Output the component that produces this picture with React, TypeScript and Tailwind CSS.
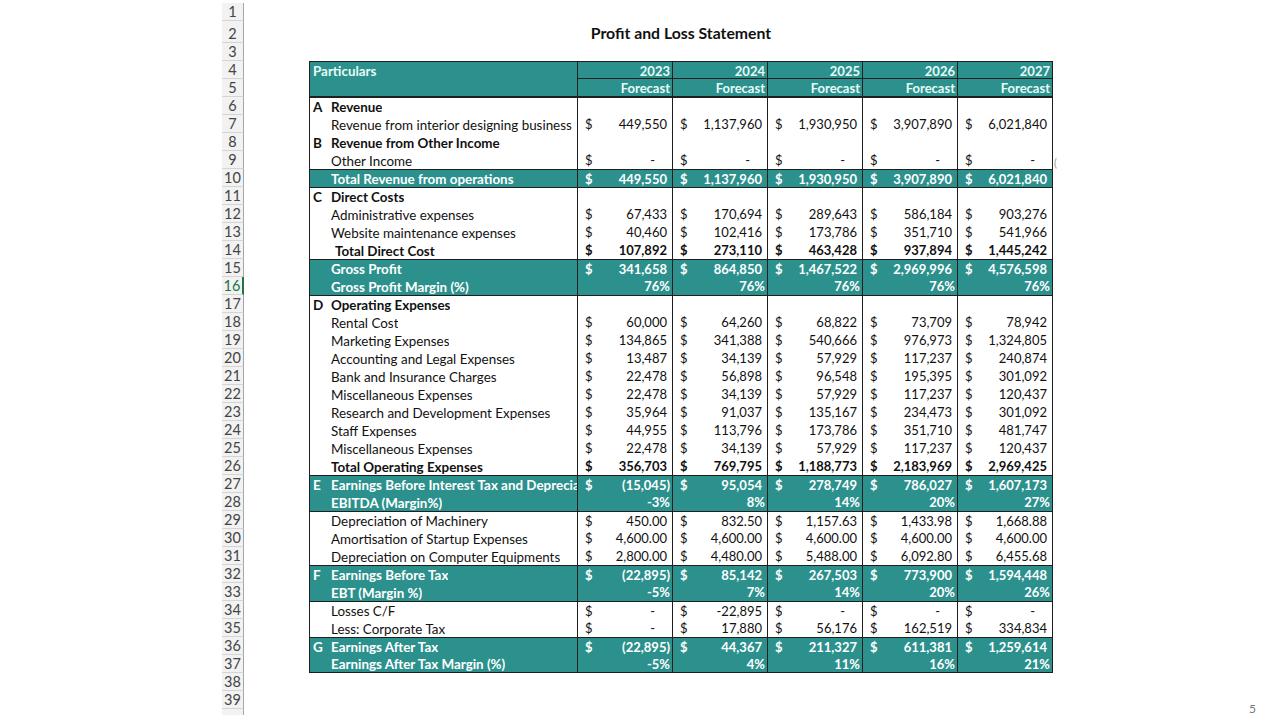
import * as React from "react";

type Kind = "plain" | "bold" | "teal" | "section";

interface Line {
  n: number;
  letter?: string;
  label: string;
  kind: Kind;
  values?: string[];
  pct?: boolean;
  indent?: boolean;
  top?: boolean;
  bottom?: boolean;
}

const lines: Line[] = [
  { n: 6, letter: "A", label: "Revenue", kind: "section", top: true },
  { n: 7, label: "Revenue from interior designing business", kind: "plain", values: ["449,550", "1,137,960", "1,930,950", "3,907,890", "6,021,840"] },
  { n: 8, letter: "B", label: "Revenue from Other Income", kind: "section" },
  { n: 9, label: "Other Income", kind: "plain", values: ["-", "-", "-", "-", "-"] },
  { n: 10, label: "Total Revenue from operations", kind: "teal", top: true, values: ["449,550", "1,137,960", "1,930,950", "3,907,890", "6,021,840"] },
  { n: 11, letter: "C", label: "Direct Costs", kind: "section", top: true },
  { n: 12, label: "Administrative expenses", kind: "plain", values: ["67,433", "170,694", "289,643", "586,184", "903,276"] },
  { n: 13, label: "Website maintenance expenses", kind: "plain", values: ["40,460", "102,416", "173,786", "351,710", "541,966"] },
  { n: 14, label: "Total Direct Cost", kind: "bold", indent: true, values: ["107,892", "273,110", "463,428", "937,894", "1,445,242"] },
  { n: 15, label: "Gross Profit", kind: "teal", top: true, values: ["341,658", "864,850", "1,467,522", "2,969,996", "4,576,598"] },
  { n: 16, label: "Gross Profit Margin (%)", kind: "teal", pct: true, values: ["76%", "76%", "76%", "76%", "76%"] },
  { n: 17, letter: "D", label: "Operating Expenses", kind: "section", top: true },
  { n: 18, label: "Rental Cost", kind: "plain", values: ["60,000", "64,260", "68,822", "73,709", "78,942"] },
  { n: 19, label: "Marketing Expenses", kind: "plain", values: ["134,865", "341,388", "540,666", "976,973", "1,324,805"] },
  { n: 20, label: "Accounting and Legal Expenses", kind: "plain", values: ["13,487", "34,139", "57,929", "117,237", "240,874"] },
  { n: 21, label: "Bank and Insurance Charges", kind: "plain", values: ["22,478", "56,898", "96,548", "195,395", "301,092"] },
  { n: 22, label: "Miscellaneous Expenses", kind: "plain", values: ["22,478", "34,139", "57,929", "117,237", "120,437"] },
  { n: 23, label: "Research and Development Expenses", kind: "plain", values: ["35,964", "91,037", "135,167", "234,473", "301,092"] },
  { n: 24, label: "Staff Expenses", kind: "plain", values: ["44,955", "113,796", "173,786", "351,710", "481,747"] },
  { n: 25, label: "Miscellaneous Expenses", kind: "plain", values: ["22,478", "34,139", "57,929", "117,237", "120,437"] },
  { n: 26, label: "Total Operating Expenses", kind: "bold", values: ["356,703", "769,795", "1,188,773", "2,183,969", "2,969,425"] },
  { n: 27, letter: "E", label: "Earnings Before Interest Tax and Deprecia", kind: "teal", top: true, values: ["(15,045)", "95,054", "278,749", "786,027", "1,607,173"] },
  { n: 28, label: "EBITDA (Margin%)", kind: "teal", pct: true, values: ["-3%", "8%", "14%", "20%", "27%"] },
  { n: 29, label: "Depreciation of Machinery", kind: "plain", top: true, values: ["450.00", "832.50", "1,157.63", "1,433.98", "1,668.88"] },
  { n: 30, label: "Amortisation of Startup Expenses", kind: "plain", values: ["4,600.00", "4,600.00", "4,600.00", "4,600.00", "4,600.00"] },
  { n: 31, label: "Depreciation on Computer Equipments", kind: "plain", values: ["2,800.00", "4,480.00", "5,488.00", "6,092.80", "6,455.68"] },
  { n: 32, letter: "F", label: "Earnings Before Tax", kind: "teal", top: true, values: ["(22,895)", "85,142", "267,503", "773,900", "1,594,448"] },
  { n: 33, label: "EBT (Margin %)", kind: "teal", pct: true, values: ["-5%", "7%", "14%", "20%", "26%"] },
  { n: 34, label: "Losses C/F", kind: "plain", top: true, values: ["-", "-22,895", "-", "-", "-"] },
  { n: 35, label: "Less: Corporate Tax", kind: "plain", values: ["-", "17,880", "56,176", "162,519", "334,834"] },
  { n: 36, letter: "G", label: "Earnings After Tax", kind: "teal", top: true, values: ["(22,895)", "44,367", "211,327", "611,381", "1,259,614"] },
  { n: 37, label: "Earnings After Tax Margin (%)", kind: "teal", pct: true, bottom: true, values: ["-5%", "4%", "11%", "16%", "21%"] },
];

function RowHead({ n, h = "h-[18px]" }: { n: number; h?: string }) {
  return (
    <div
      className={`${h} w-[22px] shrink-0 box-border bg-[#f2f2f2] border-b border-[#d4d4d4] border-r ${
        n === 16 ? "border-r-2 border-r-[#217346] text-[#217346]" : "border-r-[#a6a6a6] text-[#444]"
      } flex items-end justify-center text-[14.5px] leading-[17px]`}
    >
      {n}
    </div>
  );
}

function Value({ v, line, last }: { v: string; line: Line; last: boolean }) {
  const teal = line.kind === "teal";
  const bold = teal || line.kind === "bold";
  const dash = v === "-";
  const pr = line.pct ? "pr-[2px]" : dash ? "pr-[17px]" : v.startsWith("(") ? "pr-[2px]" : "pr-[5px]";
  return (
    <div
      className={`${last ? "w-[96px] border-r" : "w-[95px]"} shrink-0 box-border border-l border-[#1f1f1f] flex items-center justify-between pt-[2px] ${
        bold ? "font-bold" : ""
      }`}
    >
      <span className="pl-[7px]">{line.pct ? "" : "$"}</span>
      <span className={pr}>{v}</span>
    </div>
  );
}

function DataRow({ line }: { line: Line }) {
  const teal = line.kind === "teal";
  const bold = line.kind !== "plain";
  return (
    <div className="flex h-[18px]">
      <RowHead n={line.n} />
      <div className="w-[65px] shrink-0" />
      <div
        className={`flex box-border ${line.top ? "border-t" : ""} ${line.bottom ? "border-b" : ""} border-[#1f1f1f] ${
          teal ? "bg-[#2c918d] text-white" : "text-[#111]"
        }`}
      >
        <div className="w-[268px] shrink-0 box-border border-l border-[#1f1f1f] flex items-center pt-[2px] overflow-hidden whitespace-nowrap">
          <span className={`w-[21px] shrink-0 pl-[3px] text-[13.5px] ${bold ? "font-bold" : ""}`}>{line.letter ?? ""}</span>
          <span className={`min-w-0 overflow-hidden text-[13.4px] ${bold ? "font-bold" : ""} ${line.indent ? "pl-[4px]" : ""}`}>
            {line.label}
          </span>
        </div>
        {line.values
          ? line.values.map((v, i) => <Value key={i} v={v} line={line} last={i === 4} />)
          : [0, 1, 2, 3, 4].map((i) => (
              <div
                key={i}
                className={`${i === 4 ? "w-[96px] border-r" : "w-[95px]"} shrink-0 box-border border-l border-[#1f1f1f]`}
              />
            ))}
      </div>
    </div>
  );
}

function EmptyRow({ n, h = "h-[18px]", children }: { n: number; h?: string; children?: React.ReactNode }) {
  return (
    <div className={`flex ${h}`}>
      <RowHead n={n} h={h} />
      <div className="w-[65px] shrink-0" />
      <div className="w-[744px] shrink-0 flex items-center justify-center pt-[2px]">{children}</div>
    </div>
  );
}

const years = ["2023", "2024", "2025", "2026", "2027"];

export default function App() {
  return (
    <div
      className="relative w-[1280px] h-[720px] overflow-hidden bg-white text-[13px] pt-[3px] pl-[222px]"
      style={{ fontFamily: "Lato, 'Open Sans', sans-serif" }}
    >
      <EmptyRow n={1} />
      <EmptyRow n={2} h="h-[22px]">
        <span className="font-bold text-[15.8px] text-[#111]">Profit and Loss Statement</span>
      </EmptyRow>
      <EmptyRow n={3} />

      <div className="flex">
        <div className="flex flex-col">
          <RowHead n={4} />
          <RowHead n={5} />
        </div>
        <div className="w-[65px] shrink-0" />
        <div className="flex h-[36px] box-border border-t border-b border-[#1f1f1f] bg-[#2c918d] text-[#e6fbf8] font-bold">
          <div className="w-[268px] shrink-0 box-border border-l border-[#1f1f1f] pl-[3px] pt-[1px] leading-[17px] text-[13.4px]">
            Particulars
          </div>
          {years.map((y, i) => (
            <div
              key={y}
              className={`${i === 4 ? "w-[96px] border-r" : "w-[95px]"} shrink-0 box-border border-l border-[#1f1f1f] flex flex-col`}
            >
              <div className="h-[17px] box-border border-b border-[#1f1f1f] text-right pr-[2px] pt-[1px] leading-[17px]">
                {y}
              </div>
              <div className="h-[17px] text-right pr-[2px] pt-[1px] leading-[17px]">Forecast</div>
            </div>
          ))}
        </div>
      </div>

      {lines.map((l) => (
        <DataRow key={l.n} line={l} />
      ))}

      <EmptyRow n={38} />
      <EmptyRow n={39} />
      <div className="w-[22px] h-[6px] bg-[#f2f2f2] border-r border-[#a6a6a6] overflow-hidden" />

      <div className="absolute left-[1054px] top-[155px] text-[11px] text-[#999]">(</div>
      <div className="absolute left-[1249px] top-[700px] text-[12px] text-[#777]">5</div>
    </div>
  );
}
